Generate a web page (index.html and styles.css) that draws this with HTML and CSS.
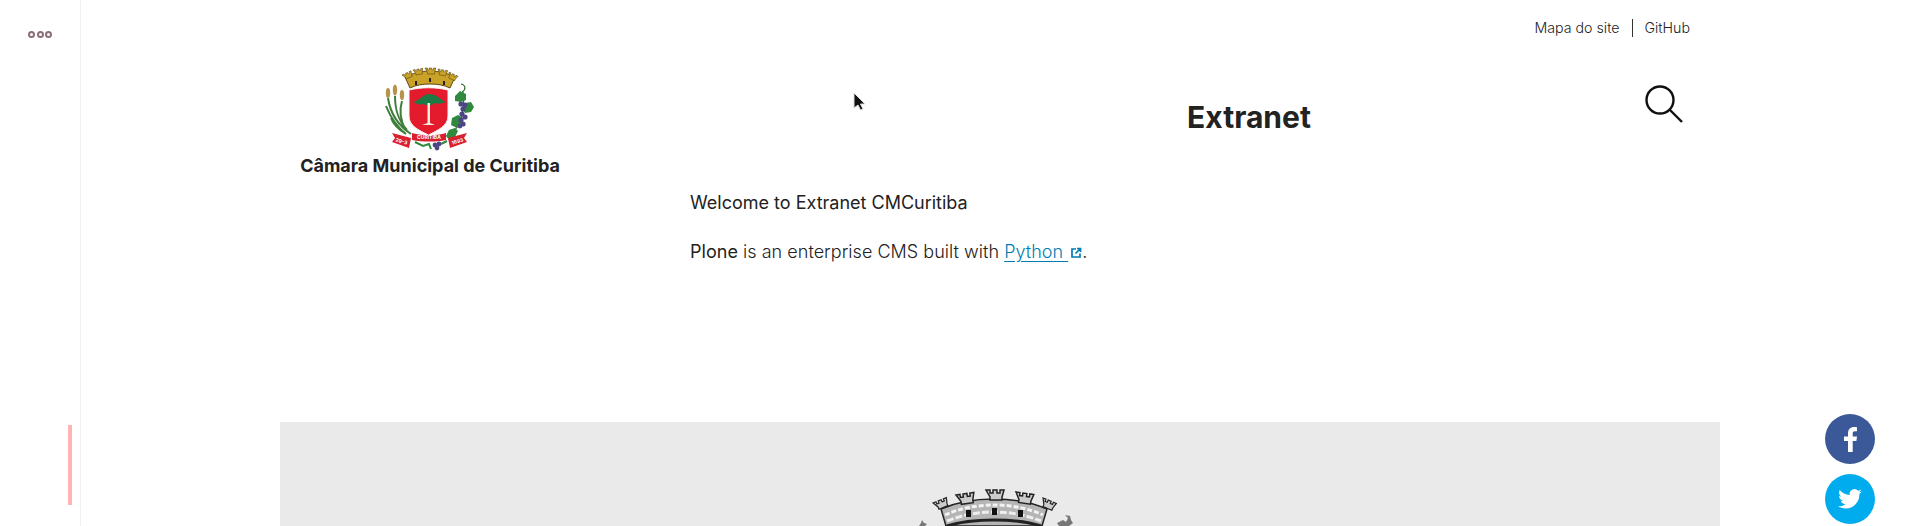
FILE: index.html
```html
<!DOCTYPE html>
<html lang="pt-BR">
<head>
    <meta charset="UTF-8">
    <title>Extranet - Câmara Municipal de Curitiba</title>
    <link rel="stylesheet" href="styles.css">
</head>
<body>

    <aside class="sidebar">
        <div class="dots"><span></span><span></span><span></span></div>
        <div class="scroll-mark"></div>
    </aside>

    <main class="page">
        <nav class="top-links">
            <a href="#">Mapa do site</a>
            <a href="#">GitHub</a>
        </nav>

        <header class="site-header">
            <a class="brand" href="#">
                <svg class="brand-logo" viewBox="0 0 110 95" width="110" height="95">
                    <defs>
                        <path id="tower" d="M0 0h4v3h3V0h4v3h3V0h4l-2 7v3H4V7z"/>
                    </defs>
                    <!-- coroa -->
                    <g fill="#c9a227" stroke="#5d4a14" stroke-width="1">
                        <path d="M30 17c8-4 17-6 25-6s17 2 25 6l-5 11c-6-3-13-4-20-4s-14 1-20 4z"/>
                        <use href="#tower" transform="translate(27 15) rotate(-25) scale(.55)"/>
                        <use href="#tower" transform="translate(38 10) rotate(-10) scale(.55)"/>
                        <use href="#tower" transform="translate(50 8) scale(.6)"/>
                        <use href="#tower" transform="translate(63 9) rotate(10) scale(.55)"/>
                        <use href="#tower" transform="translate(74 12) rotate(25) scale(.55)"/>
                    </g>
                    <path d="M41 21v4M55 18v4M69 21v4" stroke="#222" stroke-width="2"/>
                    <!-- escudo -->
                    <path d="M34 30c13-3 26-3 39 0v26c0 10-10 14-19.500 19-10-5-19.500-9-19.500-19z" fill="#e31b2c" stroke="#f4f4f4" stroke-width="1"/>
                    <path d="M38 42c6-1 9-7 16-8 8 0 11 6 17 8-6 2-9 2-11 1-3 3-9 3-12 1-4 1-6 0-10-2z" fill="#1d7a44"/>
                    <path d="M52.500 43h2.500v20l5 2H47l5.500-2z" fill="#f3ece0"/>
                    <!-- trigo -->
                    <path d="M13 38c2 14 8 26 23 36M20 36c0 14 3 24 12 34M27 41c-3 10-1 20 3 28M11 46c4 10 10 20 20 28M16 58c3 8 8 12 15 16" fill="none" stroke="#3f7d3a" stroke-width="2"/>
                    <ellipse cx="13" cy="33" rx="2.200" ry="5" fill="#b5934a"/>
                    <ellipse cx="20" cy="30" rx="2.200" ry="5.500" fill="#b5934a"/>
                    <ellipse cx="27" cy="35" rx="2.200" ry="5" fill="#b5934a"/>
                    <!-- uvas -->
                    <path d="M86 24c5 1 5 6 1 8M88 32c2 14-1 30-12 44" fill="none" stroke="#2b6b35" stroke-width="1.200"/>
                    <path d="M80 36l5-5 6 3 0 6-5 2-6-1zM90 43l6-1 3 5-3 5-6 1-3-5zM77 58l6-3 5 3-1 6-5 4-6-3zM74 70l6-2 3 3-3 6-6 3-3-4z" fill="#2f8a3e"/>
                    <g fill="#4d4685">
                        <circle cx="86" cy="44" r="2.600"/><circle cx="90" cy="45" r="2.600"/><circle cx="88" cy="49" r="2.600"/>
                        <circle cx="87" cy="54" r="2.600"/><circle cx="90" cy="57" r="2.600"/><circle cx="86" cy="60" r="2.600"/>
                        <circle cx="88" cy="64" r="2.600"/><circle cx="85" cy="66" r="2.400"/>
                        <circle cx="60" cy="85" r="2.400"/><circle cx="64" cy="84" r="2.400"/><circle cx="62" cy="88" r="2.400"/>
                    </g>
                    <path d="M40 82l8 4 6-2 2 5M66 84l6-3" fill="none" stroke="#2f8a3e" stroke-width="2"/>
                    <!-- faixa -->
                    <path d="M17 73l19 5-2 10-17-6 3-4zM92 73l-19 5 2 10 17-6-3-4z" fill="#d9202f"/>
                    <path d="M37 73c11 3 24 3 34 0v7c-10 2-23 2-34 0z" fill="#d9202f"/>
                    <text class="ribbon-text" x="54" y="79" text-anchor="middle">CURITIBA</text>
                    <text class="ribbon-text" x="26" y="83" text-anchor="middle" transform="rotate(16 26 83)">29-3</text>
                    <text class="ribbon-text" x="83" y="83" text-anchor="middle" transform="rotate(-16 83 83)">1693</text>
                </svg>
                <span class="brand-name">Câmara Municipal de Curitiba</span>
            </a>
            <h1 class="site-title">Extranet</h1>
            <svg class="search-icon" viewBox="0 0 38 38" width="38" height="38">
                <circle cx="15" cy="15" r="13.500" fill="none" stroke="#111" stroke-width="2.400"/>
                <path d="M25 25l12 12" stroke="#111" stroke-width="2.400"/>
            </svg>
        </header>

        <section class="content">
            <p class="welcome">Welcome to Extranet CMCuritiba</p>
            <p class="intro"><b>Plone</b> is an enterprise CMS built with <a href="#">Python <svg class="ext-icon" viewBox="0 0 12 12" width="12" height="12"><path d="M6 2H2v8h8V6.500M7 1.500h3.500V5M10 2L5.500 6.500" fill="none" stroke="#007eb1" stroke-width="1.700"/></svg></a>.</p>
        </section>

        <footer class="site-footer">
            <svg class="footer-crest" viewBox="0 0 122 37" width="122" height="37">
                <defs>
                    <path id="crest-tower" d="M0 0h4v3h3V0h4v3h3V0h4l-2 7v3H4V7z"/>
                </defs>
                <path d="M8 20c16-7 35-10 53-10s37 3 53 10l-5 17H13z" fill="#b5b5b5" stroke="#222" stroke-width="1.500"/>
                <path d="M12 26c15-7 33-10 49-10s34 3 49 10" fill="none" stroke="#f2f2f2" stroke-width="3" stroke-dasharray="5 2"/>
                <path d="M14 32c15-6 31-9 47-9s32 3 47 9" fill="none" stroke="#eee" stroke-width="3" stroke-dasharray="7 2"/>
                <g fill="#ccc" stroke="#222" stroke-width="1.500">
                    <use href="#crest-tower" transform="translate(0 14) rotate(-22) scale(.8)"/>
                    <use href="#crest-tower" transform="translate(23 6) rotate(-8)"/>
                    <use href="#crest-tower" transform="translate(53 1)"/>
                    <use href="#crest-tower" transform="translate(83 3) rotate(8)"/>
                    <use href="#crest-tower" transform="translate(110 9) rotate(22) scale(.8)"/>
                </g>
                <path d="M33 21h5v7h-5zM59 19h5v7h-5zM85 21h5v7h-5z" fill="#111"/>
                <path d="M14 37c15-5 31-6 47-6s32 1 47 6" fill="none" stroke="#222" stroke-width="3"/>
                <path d="M-14 37l2-3 1-3 2 3 3 1-2 2zM124 34l6-3 3 2 2-4-3-3 5 1 1 4 2 3-4 3h-10z" fill="#777"/>
            </svg>
        </footer>
    </main>

    <div class="social">
        <a class="social-btn facebook" href="#">
            <svg viewBox="0 0 13 25" width="13" height="25"><path d="M4 25V14H0V9.500h4V6.300C4 2.300 6.400 0 10 0c1.300 0 2.400.100 3 .200v4.100h-2.100C9.200 4.300 8.700 5 8.700 6.400v3.100H13l-.600 4.500H8.700v11z" fill="#fff"/></svg>
        </a>
        <a class="social-btn twitter" href="#">
            <svg viewBox="0 0 24 24" width="26" height="26"><path d="M23 5c-.8.400-1.700.6-2.600.7.900-.6 1.600-1.400 2-2.500-.9.500-1.800.9-2.900 1.100a4.500 4.500 0 0 0-7.700 4.100C8 8.200 4.700 6.400 2.500 3.700c-1.200 2-.6 4.600 1.400 6-.7 0-1.400-.2-2-.6 0 2.200 1.500 4.100 3.600 4.500-.7.200-1.400.2-2 .1.600 1.800 2.200 3.100 4.200 3.100-1.900 1.500-4.300 2.200-6.700 1.900 2 1.300 4.400 2 6.900 2 8.400 0 13.100-7.100 12.800-13.400.9-.6 1.700-1.400 2.300-2.300z" fill="#fff"/></svg>
        </a>
    </div>

    <svg class="cursor" viewBox="0 0 14 20" width="14" height="20">
        <path d="M1 1v15l4-3 2.500 5 2.500-1-2.500-5H12z" fill="#111" stroke="#ddd" stroke-width="1"/>
    </svg>

</body>
</html>
```

FILE: styles.css
```css
html, body {
    height: 100%;
}

body {
    margin: 0;
    display: flex;
    height: 100vh;
    overflow: hidden;
    background-color: #fff;
    color: #222;
    font-family: Inter, "Liberation Sans", sans-serif;
}

a {
    color: inherit;
    text-decoration: none;
}

/* barra lateral */
.sidebar {
    flex: 0 0 81px;
    box-sizing: border-box;
    display: flex;
    flex-direction: column;
    justify-content: space-between;
    padding: 31px 8px 21px 0;
    border-right: 1px solid #edf0f0;
}

.dots {
    display: flex;
    justify-content: flex-end;
    gap: 1.5px;
    padding-right: 20px;
}

.dots span {
    width: 7px;
    height: 7px;
    box-sizing: border-box;
    border: 2px solid #8a6f78;
    border-radius: 50%;
}

.scroll-mark {
    align-self: flex-end;
    width: 4px;
    height: 80px;
    background-color: #ffb3b3;
}

.page {
    flex: 1;
    display: flex;
    flex-direction: column;
    align-items: center;
    min-width: 0;
    padding-right: 1px;
}

.page > * {
    width: 1440px;
    box-sizing: border-box;
}

.top-links {
    display: flex;
    justify-content: flex-end;
    padding: 19px 30px 0 0;
    font-size: 14.2px;
    font-weight: 300;
    line-height: 18px;
}

.top-links a + a {
    margin-left: 12px;
    padding-left: 12px;
    border-left: 1px solid #333;
}

/* cabecalho */
.site-header {
    display: flex;
    align-items: flex-start;
    height: 153px;
    padding-top: 23px;
}

.brand {
    flex: 0 0 300px;
    display: flex;
    flex-direction: column;
    align-items: center;
}

.brand-logo {
    display: block;
}

.ribbon-text {
    font-size: 5px;
    font-weight: 700;
    fill: #fff;
}

.brand-name {
    font-size: 18px;
    font-weight: 700;
    line-height: 22px;
}

.site-title {
    flex: 1;
    margin: 37px 0 0;
    padding-left: 274px;
    font-size: 30px;
    font-weight: 700;
    line-height: 40px;
    text-align: center;
    box-sizing: border-box;
}

.search-icon {
    margin: 25px 37px 0 1px;
}

/* conteudo */
.content {
    height: 233px;
    padding-left: 410px;
    font-size: 18px;
    line-height: 26px;
}

.content p {
    margin: 0 0 23px;
}

.welcome {
    font-weight: 400;
}

.intro {
    font-weight: 300;
    letter-spacing: .03px;
}

.intro b {
    font-weight: 400;
}

.intro a {
    color: #007eb1;
    text-decoration: underline;
    text-underline-offset: 3px;
}

.ext-icon {
    margin-left: 2px;
    vertical-align: -1px;
}

/* rodape */
.site-footer {
    flex: 1;
    display: flex;
    justify-content: center;
    padding-top: 67px;
    background-color: #eaeaea;
}

.footer-crest {
    display: block;
    margin-left: -12px;
    overflow: visible;
}

/* botoes sociais */
.social {
    position: fixed;
    top: 414px;
    right: 45px;
    display: flex;
    flex-direction: column;
    gap: 10px;
}

.social-btn {
    display: flex;
    align-items: center;
    justify-content: center;
    width: 50px;
    height: 50px;
    border-radius: 50%;
}

.facebook {
    background-color: #3b5998;
}

.twitter {
    background-color: #00aced;
}

.cursor {
    position: fixed;
    top: 92px;
    left: 853px;
}
```
